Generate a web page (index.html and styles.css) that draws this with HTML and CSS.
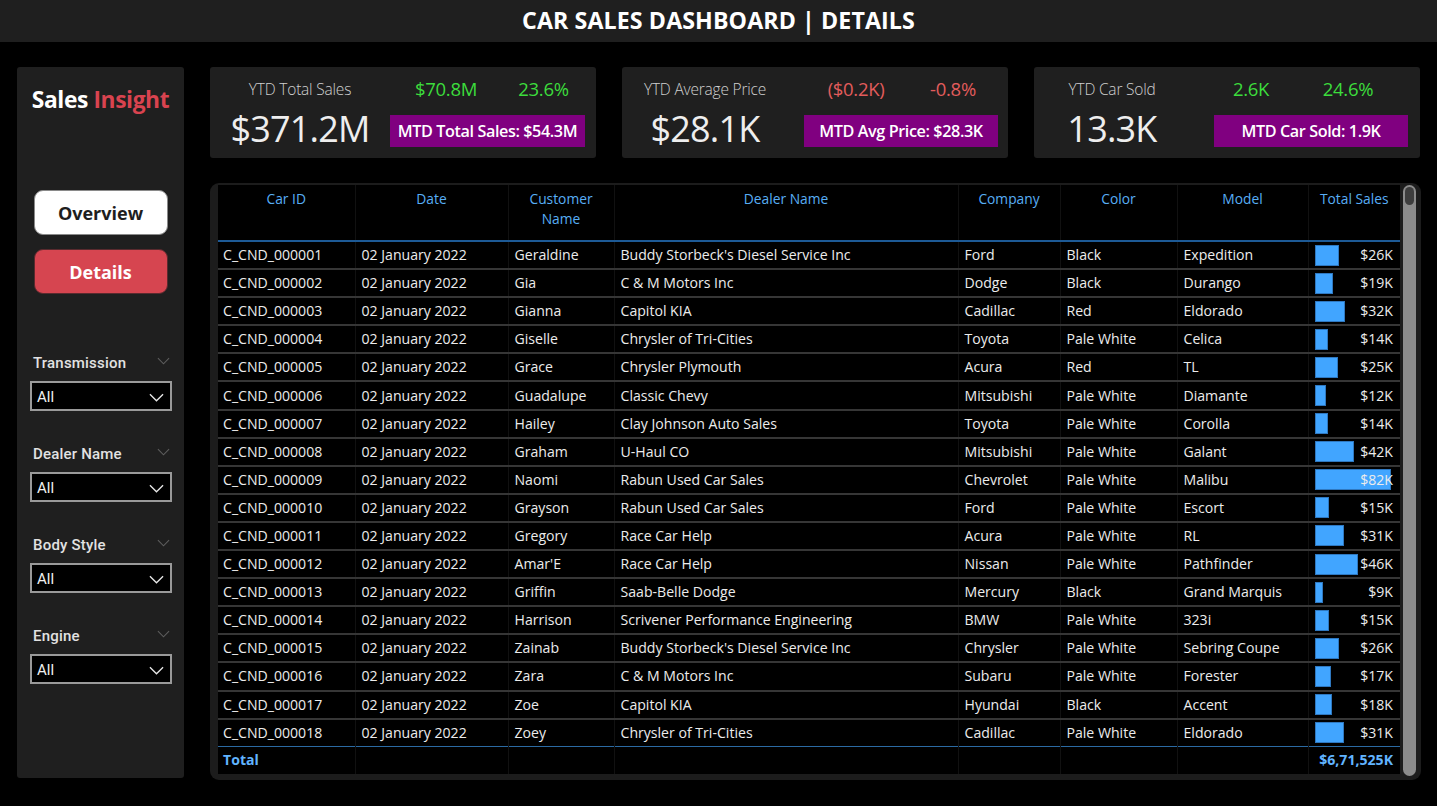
FILE: index.html
```html
<!DOCTYPE html>
<html lang="en">
<head>
<meta charset="utf-8">
<title>Car Sales Dashboard | Details</title>
<link rel="stylesheet" href="styles.css">
</head>
<body>
<header class="topbar"><h1>CAR SALES DASHBOARD | DETAILS</h1></header>
<div class="layout">
  <aside class="sidebar">
    <div class="brand"><span class="brand-w">Sales</span> <span class="brand-r">Insight</span></div>
    <button class="btn btn-overview">Overview</button>
    <button class="btn btn-details">Details</button>
    <div class="filters">
      <div class="filter">
        <div class="filter-head"><span>Transmission</span><svg class="mini-chev" viewBox="0 0 14 8"><path d="M1 1l6 6 6-6"/></svg></div>
        <div class="select"><span>All</span><svg class="sel-chev" viewBox="0 0 16 9"><path d="M1 1l7 7 7-7"/></svg></div>
      </div>
      <div class="filter">
        <div class="filter-head"><span>Dealer Name</span><svg class="mini-chev" viewBox="0 0 14 8"><path d="M1 1l6 6 6-6"/></svg></div>
        <div class="select"><span>All</span><svg class="sel-chev" viewBox="0 0 16 9"><path d="M1 1l7 7 7-7"/></svg></div>
      </div>
      <div class="filter">
        <div class="filter-head"><span>Body Style</span><svg class="mini-chev" viewBox="0 0 14 8"><path d="M1 1l6 6 6-6"/></svg></div>
        <div class="select"><span>All</span><svg class="sel-chev" viewBox="0 0 16 9"><path d="M1 1l7 7 7-7"/></svg></div>
      </div>
      <div class="filter">
        <div class="filter-head"><span>Engine</span><svg class="mini-chev" viewBox="0 0 14 8"><path d="M1 1l6 6 6-6"/></svg></div>
        <div class="select"><span>All</span><svg class="sel-chev" viewBox="0 0 16 9"><path d="M1 1l7 7 7-7"/></svg></div>
      </div>
    </div>
  </aside>

  <main class="main">
    <section class="kpis">
      <div class="card card-1">
        <div class="k-title">YTD Total Sales</div>
        <div class="k-delta pos k-a">$70.8M</div>
        <div class="k-delta pos k-b">23.6%</div>
        <div class="k-value">$371.2M</div>
        <div class="k-mtd">MTD Total Sales: $54.3M</div>
      </div>
      <div class="card card-2">
        <div class="k-title">YTD Average Price</div>
        <div class="k-delta neg k-a">($0.2K)</div>
        <div class="k-delta neg k-b">-0.8%</div>
        <div class="k-value">$28.1K</div>
        <div class="k-mtd">MTD Avg Price: $28.3K</div>
      </div>
      <div class="card card-3">
        <div class="k-title">YTD Car Sold</div>
        <div class="k-delta pos k-a">2.6K</div>
        <div class="k-delta pos k-b">24.6%</div>
        <div class="k-value">13.3K</div>
        <div class="k-mtd">MTD Car Sold: 1.9K</div>
      </div>
    </section>

    <section class="table-frame">
      <table class="grid">
        <colgroup>
          <col class="c-id"><col class="c-date"><col class="c-cust"><col class="c-dealer"><col class="c-comp"><col class="c-color"><col class="c-model"><col class="c-sales">
        </colgroup>
        <thead>
          <tr><th>Car ID</th><th>Date</th><th>Customer Name</th><th>Dealer Name</th><th>Company</th><th>Color</th><th>Model</th><th>Total Sales</th></tr>
        </thead>
        <tbody>
          <tr><td>C_CND_000001</td><td>02 January 2022</td><td>Geraldine</td><td>Buddy Storbeck's Diesel Service Inc</td><td>Ford</td><td>Black</td><td>Expedition</td><td class="sales"><div class="cellbar"><span class="bar" style="width:24px"></span><span class="val">$26K</span></div></td></tr>
          <tr><td>C_CND_000002</td><td>02 January 2022</td><td>Gia</td><td>C &amp; M Motors Inc</td><td>Dodge</td><td>Black</td><td>Durango</td><td class="sales"><div class="cellbar"><span class="bar" style="width:18px"></span><span class="val">$19K</span></div></td></tr>
          <tr><td>C_CND_000003</td><td>02 January 2022</td><td>Gianna</td><td>Capitol KIA</td><td>Cadillac</td><td>Red</td><td>Eldorado</td><td class="sales"><div class="cellbar"><span class="bar" style="width:30px"></span><span class="val">$32K</span></div></td></tr>
          <tr><td>C_CND_000004</td><td>02 January 2022</td><td>Giselle</td><td>Chrysler of Tri-Cities</td><td>Toyota</td><td>Pale White</td><td>Celica</td><td class="sales"><div class="cellbar"><span class="bar" style="width:13px"></span><span class="val">$14K</span></div></td></tr>
          <tr><td>C_CND_000005</td><td>02 January 2022</td><td>Grace</td><td>Chrysler Plymouth</td><td>Acura</td><td>Red</td><td>TL</td><td class="sales"><div class="cellbar"><span class="bar" style="width:23px"></span><span class="val">$25K</span></div></td></tr>
          <tr><td>C_CND_000006</td><td>02 January 2022</td><td>Guadalupe</td><td>Classic Chevy</td><td>Mitsubishi</td><td>Pale White</td><td>Diamante</td><td class="sales"><div class="cellbar"><span class="bar" style="width:11px"></span><span class="val">$12K</span></div></td></tr>
          <tr><td>C_CND_000007</td><td>02 January 2022</td><td>Hailey</td><td>Clay Johnson Auto Sales</td><td>Toyota</td><td>Pale White</td><td>Corolla</td><td class="sales"><div class="cellbar"><span class="bar" style="width:13px"></span><span class="val">$14K</span></div></td></tr>
          <tr><td>C_CND_000008</td><td>02 January 2022</td><td>Graham</td><td>U-Haul CO</td><td>Mitsubishi</td><td>Pale White</td><td>Galant</td><td class="sales"><div class="cellbar"><span class="bar" style="width:39px"></span><span class="val">$42K</span></div></td></tr>
          <tr><td>C_CND_000009</td><td>02 January 2022</td><td>Naomi</td><td>Rabun Used Car Sales</td><td>Chevrolet</td><td>Pale White</td><td>Malibu</td><td class="sales"><div class="cellbar"><span class="bar" style="width:76px"></span><span class="val">$82K</span></div></td></tr>
          <tr><td>C_CND_000010</td><td>02 January 2022</td><td>Grayson</td><td>Rabun Used Car Sales</td><td>Ford</td><td>Pale White</td><td>Escort</td><td class="sales"><div class="cellbar"><span class="bar" style="width:14px"></span><span class="val">$15K</span></div></td></tr>
          <tr><td>C_CND_000011</td><td>02 January 2022</td><td>Gregory</td><td>Race Car Help</td><td>Acura</td><td>Pale White</td><td>RL</td><td class="sales"><div class="cellbar"><span class="bar" style="width:29px"></span><span class="val">$31K</span></div></td></tr>
          <tr><td>C_CND_000012</td><td>02 January 2022</td><td>Amar'E</td><td>Race Car Help</td><td>Nissan</td><td>Pale White</td><td>Pathfinder</td><td class="sales"><div class="cellbar"><span class="bar" style="width:43px"></span><span class="val">$46K</span></div></td></tr>
          <tr><td>C_CND_000013</td><td>02 January 2022</td><td>Griffin</td><td>Saab-Belle Dodge</td><td>Mercury</td><td>Black</td><td>Grand Marquis</td><td class="sales"><div class="cellbar"><span class="bar" style="width:8px"></span><span class="val">$9K</span></div></td></tr>
          <tr><td>C_CND_000014</td><td>02 January 2022</td><td>Harrison</td><td>Scrivener Performance Engineering</td><td>BMW</td><td>Pale White</td><td>323i</td><td class="sales"><div class="cellbar"><span class="bar" style="width:14px"></span><span class="val">$15K</span></div></td></tr>
          <tr><td>C_CND_000015</td><td>02 January 2022</td><td>Zainab</td><td>Buddy Storbeck's Diesel Service Inc</td><td>Chrysler</td><td>Pale White</td><td>Sebring Coupe</td><td class="sales"><div class="cellbar"><span class="bar" style="width:24px"></span><span class="val">$26K</span></div></td></tr>
          <tr><td>C_CND_000016</td><td>02 January 2022</td><td>Zara</td><td>C &amp; M Motors Inc</td><td>Subaru</td><td>Pale White</td><td>Forester</td><td class="sales"><div class="cellbar"><span class="bar" style="width:16px"></span><span class="val">$17K</span></div></td></tr>
          <tr><td>C_CND_000017</td><td>02 January 2022</td><td>Zoe</td><td>Capitol KIA</td><td>Hyundai</td><td>Black</td><td>Accent</td><td class="sales"><div class="cellbar"><span class="bar" style="width:17px"></span><span class="val">$18K</span></div></td></tr>
          <tr><td>C_CND_000018</td><td>02 January 2022</td><td>Zoey</td><td>Chrysler of Tri-Cities</td><td>Cadillac</td><td>Pale White</td><td>Eldorado</td><td class="sales"><div class="cellbar"><span class="bar" style="width:29px"></span><span class="val">$31K</span></div></td></tr>
        </tbody>
        <tfoot>
          <tr><td>Total</td><td></td><td></td><td></td><td></td><td></td><td></td><td class="sales-total">$6,71,525K</td></tr>
        </tfoot>
      </table>
      <div class="scrollbar"><div class="thumb"></div></div>
    </section>
  </main>
</div>
</body>
</html>
```

FILE: styles.css
```css
* { box-sizing: border-box; }

body {
  margin: 0;
  width: 1437px;
  height: 806px;
  overflow: hidden;
  background: #000;
  font-family: "Open Sans", "Noto Sans", sans-serif;
  color: #ececec;
}

/* ---------- top bar ---------- */
.topbar {
  height: 42px;
  background: #1f1f1f;
  display: flex;
  align-items: center;
  justify-content: center;
}
.topbar h1 {
  margin: 0 0 2px;
  font-size: 23.2px;
  font-weight: 700;
  color: #fff;
  letter-spacing: 0.1px;
}

.layout {
  display: flex;
  gap: 26px;
  padding: 25px 0 0 17px;
}

/* ---------- sidebar ---------- */
.sidebar {
  width: 167px;
  height: 711px;
  background: #1f1f1f;
  border-radius: 3px;
  display: flex;
  flex-direction: column;
  align-items: center;
  padding-top: 18px;
}
.brand {
  font-size: 22.8px;
  font-weight: 700;
  letter-spacing: -0.4px;
  line-height: 30px;
}
.brand-w { color: #fff; }
.brand-r { color: #d9434f; }

.btn {
  width: 134px;
  height: 45px;
  border-radius: 9px;
  font-family: "Open Sans", sans-serif;
  font-size: 18px;
  font-weight: 700;
  cursor: pointer;
  padding: 0;
}
.btn-overview {
  margin-top: 75px;
  background: #fff;
  color: #1e1e1e;
  border: 1px solid #8a8a8a;
}
.btn-details {
  margin-top: 14px;
  background: #d64550;
  color: #fff;
  border: 1px solid #5a2a2e;
}

.filters {
  margin-top: 57px;
  display: flex;
  flex-direction: column;
  gap: 31px;
  width: 167px;
  padding: 0 12px 0 13px;
}
.filter-head {
  display: flex;
  justify-content: space-between;
  align-items: center;
  height: 24px;
  padding: 0 2px 0 3px;
  font-family: "Roboto", sans-serif;
  font-weight: 500;
  font-size: 15px;
  color: #e2e2e2;
  letter-spacing: 0.2px;
}
.mini-chev {
  width: 13px;
  height: 8px;
  margin-top: -4px;
  fill: none;
  stroke: #5d5d5d;
  stroke-width: 1.2;
}
.select {
  margin-top: 6px;
  height: 30px;
  background: #000;
  border: 2px solid #9a9a9a;
  display: flex;
  align-items: center;
  justify-content: space-between;
  padding: 2px 6px 0 5px;
  font-family: "Roboto", sans-serif;
  font-size: 15px;
  color: #f0f0f0;
}
.sel-chev {
  width: 15px;
  height: 9px;
  fill: none;
  stroke: #e8e8e8;
  stroke-width: 1.4;
}

/* ---------- main ---------- */
.main {
  width: 1211px;
  display: flex;
  flex-direction: column;
  gap: 25px;
}

.kpis {
  display: flex;
  gap: 26px;
}
.card {
  width: 386px;
  height: 91px;
  background: #1f1f1f;
  border-radius: 3px;
  display: grid;
  grid-template-rows: 43px 48px;
  grid-template-areas:
    "title . a b ."
    "value . mtd mtd .";
}
.card-1 { grid-template-columns: 180px 0 112px 83px 11px; }
.card-2 { grid-template-columns: 166px 16px 104px 90px 10px; }
.card-3 { grid-template-columns: 156px 24px 74px 120px 12px; }

.k-title {
  grid-area: title;
  align-self: center;
  text-align: center;
  font-size: 15.5px;
  font-weight: 300;
  color: #d0d0d0;
  letter-spacing: -0.2px;
}
.k-delta {
  align-self: center;
  text-align: center;
  font-size: 18.5px;
  font-weight: 500;
  letter-spacing: -0.3px;
}
.k-a { grid-area: a; }
.k-b { grid-area: b; }
.pos { color: #3cdc3c; }
.neg { color: #e25c5c; }

.k-value {
  grid-area: value;
  text-align: center;
  font-size: 36px;
  font-weight: 400;
  line-height: 38px;
  color: #eeeeee;
  letter-spacing: -0.8px;
}
.k-mtd {
  grid-area: mtd;
  align-self: start;
  margin-top: 5px;
  height: 32px;
  background: #800080;
  color: #fff;
  display: flex;
  align-items: center;
  justify-content: center;
  font-size: 16.2px;
  font-weight: 600;
  letter-spacing: -0.4px;
}

/* ---------- table ---------- */
.table-frame {
  height: 597px;
  background: #1c1c1c;
  border-radius: 9px;
  display: flex;
  align-items: flex-start;
  gap: 3px;
  padding: 2px 0 0 8px;
}

.grid {
  width: 1182px;
  table-layout: fixed;
  border-collapse: collapse;
  background: #000;
  font-size: 14.1px;
}
.c-id { width: 137px; }
.c-date { width: 153px; }
.c-cust { width: 106px; }
.c-dealer { width: 344px; }
.c-comp { width: 102px; }
.c-color { width: 117px; }
.c-model { width: 131px; }
.c-sales { width: 92px; }

.grid th {
  height: 56px;
  vertical-align: top;
  padding: 4px 6px 0;
  font-weight: 400;
  font-size: 13.8px;
  color: #58aef5;
  line-height: 20px;
  text-align: center;
  border-left: 1px solid #111;
  border-bottom: 2px solid #1d5a96;
}
.grid th:first-child { border-left: none; }

.grid td {
  height: 28.1px;
  padding: 0 6px;
  white-space: nowrap;
  overflow: hidden;
  color: #ececec;
  border-left: 1px solid #111;
  border-bottom: 2px solid #363636;
  line-height: 20px;
}
.grid td:first-child { border-left: none; padding-left: 5px; }
.grid tbody tr:last-child td { border-bottom: none; }

.sales { padding-right: 7px !important; }
.cellbar {
  display: grid;
  align-items: center;
}
.bar, .val { grid-area: 1 / 1; }
.bar {
  justify-self: start;
  height: 21px;
  background: #41a5ff;
  border: 1px solid #2f78c0;
}
.val {
  justify-self: end;
  position: relative;
}

.grid tfoot td {
  height: 27px;
  border-top: 1px solid #2b6aa3;
  border-bottom: none;
  font-weight: 700;
  color: #61b4ff;
}
.sales-total { text-align: right; padding-right: 7px !important; }

.scrollbar {
  width: 13px;
  height: 591px;
  background: #8b8b8b;
  border-radius: 7px;
  padding: 2px;
}
.thumb {
  height: 18px;
  background: #3d3d3d;
  border-radius: 5px;
}
```
